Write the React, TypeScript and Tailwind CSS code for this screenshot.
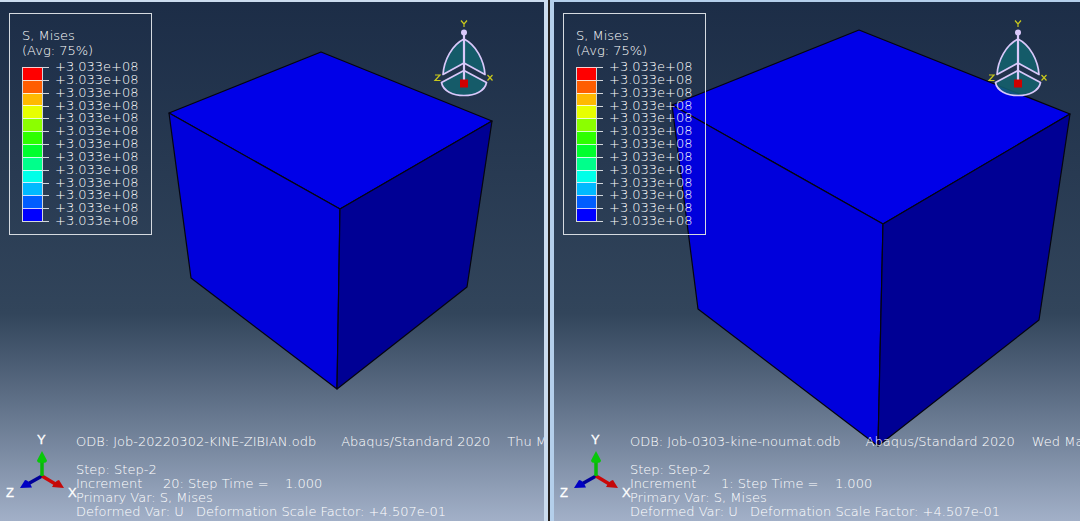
import React from "react";

type Point = [number, number];

interface CubeShape {
  top: Point[];
  left: Point[];
  right: Point[];
}

interface ViewportData {
  database: string;
  date: string;
  increment: string;
  cube: CubeShape;
}

const bands = [
  "bg-[#ff0000]",
  "bg-[#ff5d00]",
  "bg-[#ffb900]",
  "bg-[#e8ff00]",
  "bg-[#8bff00]",
  "bg-[#2eff00]",
  "bg-[#00ff2e]",
  "bg-[#00ff8b]",
  "bg-[#00ffe8]",
  "bg-[#00b9ff]",
  "bg-[#005dff]",
  "bg-[#0000ff]",
];

const viewports: ViewportData[] = [
  {
    database: "Job-20220302-KINE-ZIBIAN.odb",
    date: "Thu M",
    increment: "Increment     20: Step Time =    1.000",
    cube: {
      top: [[321, 52], [492, 121], [340, 209], [169, 113]],
      left: [[169, 113], [340, 209], [337, 389], [191, 278]],
      right: [[340, 209], [492, 121], [467, 287], [337, 389]],
    },
  },
  {
    database: "Job-0303-kine-noumat.odb",
    date: "Wed Ma",
    increment: "Increment      1: Step Time =    1.000",
    cube: {
      top: [[305, 30], [516, 114], [329, 224], [118, 105]],
      left: [[118, 105], [329, 224], [324, 446], [144, 309]],
      right: [[329, 224], [516, 114], [485, 320], [324, 446]],
    },
  },
];

const toPoints = (points: Point[]) => points.map((p) => p.join(",")).join(" ");

function Cube({ shape }: { shape: CubeShape }) {
  return (
    <svg className="absolute inset-0 h-full w-full" aria-hidden="true">
      <g stroke="#05050f" strokeWidth="1.2" strokeLinejoin="round">
        <polygon points={toPoints(shape.top)} fill="#0000e8" />
        <polygon points={toPoints(shape.left)} fill="#0000dc" />
        <polygon points={toPoints(shape.right)} fill="#000094" />
      </g>
    </svg>
  );
}

function Legend() {
  return (
    <section className="mt-[11px] ml-[9px] h-[222px] w-[143px] shrink-0 border border-[#d5dae0] pt-[14px] pl-3">
      <h2 className="leading-[15px]">S, Mises</h2>
      <p className="leading-[15px]">(Avg: 75%)</p>
      <div className="flex items-start pt-0.5">
        <div className="mt-[7px] grid h-[155px] w-[21px] grid-rows-12 border-x border-b border-white/80">
          {bands.map((band) => (
            <div key={band} className={`border-t border-white/80 ${band}`} />
          ))}
        </div>
        <ul className="ml-3 grid h-[167px] grid-rows-13">
          {[...bands, "end"].map((band) => (
            <li
              key={band}
              className="relative leading-[13px] before:absolute before:top-[7px] before:-left-3 before:h-px before:w-1.5 before:bg-white/80"
            >
              +3.033e+08
            </li>
          ))}
        </ul>
      </div>
    </section>
  );
}

function Compass() {
  return (
    <svg
      className="mt-[14px] ml-[280px] h-[88px] w-[64px] shrink-0"
      viewBox="0 0 64 88"
      role="img"
      aria-label="View compass"
    >
      <g fill="none" stroke="#c9c91c" strokeWidth="1.2">
        <path d="M29 4.500l3 3.500 3-3.500M32 8v3" />
        <path d="M3 59h5l-5 5.500h5.500" />
        <path d="M55.500 59l5 5.500M60.500 59l-5 5.500" />
      </g>
      <g stroke="#d9c8fa" strokeWidth="1.700" strokeLinejoin="round">
        <path d="M32 23C20 29 12 44 11 58.500L32 47L53 58.500C52 44 44 29 32 23Z" fill="#13636f" fillOpacity=".85" />
        <path d="M32 54.500L54.500 66.500C53 75 43 79.500 32 79.500C21 79.500 11 75 9.500 66.500Z" fill="#13636f" fillOpacity=".85" />
        <path d="M32 18V66" strokeWidth="2.200" />
      </g>
      <circle cx="32" cy="16.500" r="3" fill="#d9c8fa" />
      <rect x="28" y="63.500" width="8" height="8" fill="#d00000" />
    </svg>
  );
}

function Triad() {
  return (
    <svg
      className="h-[88px] w-[75px] shrink-0 overflow-visible"
      viewBox="0 0 75 88"
      role="img"
      aria-label="Axis triad"
    >
      <g strokeWidth="3.500">
        <path d="M42 43L26 52" stroke="#000098" />
        <path d="M42 43L57 52" stroke="#cc0808" />
        <path d="M42 43V25" stroke="#08b808" />
      </g>
      <path d="M42 18L37 27.500Q37 30 42 30Q47 30 47 27.500Z" fill="#08c808" />
      <path d="M20 55L25 47Q29 47 32 54.500Z" fill="#0000c4" />
      <path d="M64 55L59 47Q55 48 52 54Z" fill="#c40808" />
      <g className="fill-white font-['Liberation_Sans',sans-serif] text-[13px] font-normal" stroke="#ffffff" strokeWidth=".3">
        <text x="37" y="11">Y</text>
        <text x="6" y="64">Z</text>
        <text x="68" y="64">X</text>
      </g>
    </svg>
  );
}

function Viewport({ data, className }: { data: ViewportData; className: string }) {
  return (
    <article
      className={`relative isolate flex min-w-0 flex-col justify-between overflow-hidden border-t-2 bg-linear-to-b from-[#1c2d47] via-[#32455b] via-60% to-[#a2b0c8] ${className}`}
    >
      <div className="absolute inset-x-0 -top-0.5 bottom-0 -z-10">
        <Cube shape={data.cube} />
      </div>
      <div className="flex items-start">
        <Legend />
        <Compass />
      </div>
      <footer className="flex items-end">
        <Triad />
        <div className="mb-0.5 pl-px leading-[14px] whitespace-pre">
          <p className="mb-[14px] flex">
            <span className="mr-[25px]">ODB: {data.database}</span>
            <span className="mr-[17px]">Abaqus/Standard 2020</span>
            <span>{data.date}</span>
          </p>
          <p>Step: Step-2</p>
          <p>{data.increment}</p>
          <p>Primary Var: S, Mises</p>
          <p>{"Deformed Var: U   Deformation Scale Factor: +4.507e-01"}</p>
        </div>
      </footer>
    </article>
  );
}

export default function App() {
  return (
    <main className="grid h-screen grid-cols-[548fr_530fr] gap-x-0.5 bg-[#25211f] font-['DejaVu_Sans',sans-serif] text-[13px] font-extralight text-white">
      <Viewport data={viewports[0]} className="border-r-4 border-[#cbdcef]" />
      <Viewport data={viewports[1]} className="border-l-4 border-[#b4cfeb]" />
    </main>
  );
}
